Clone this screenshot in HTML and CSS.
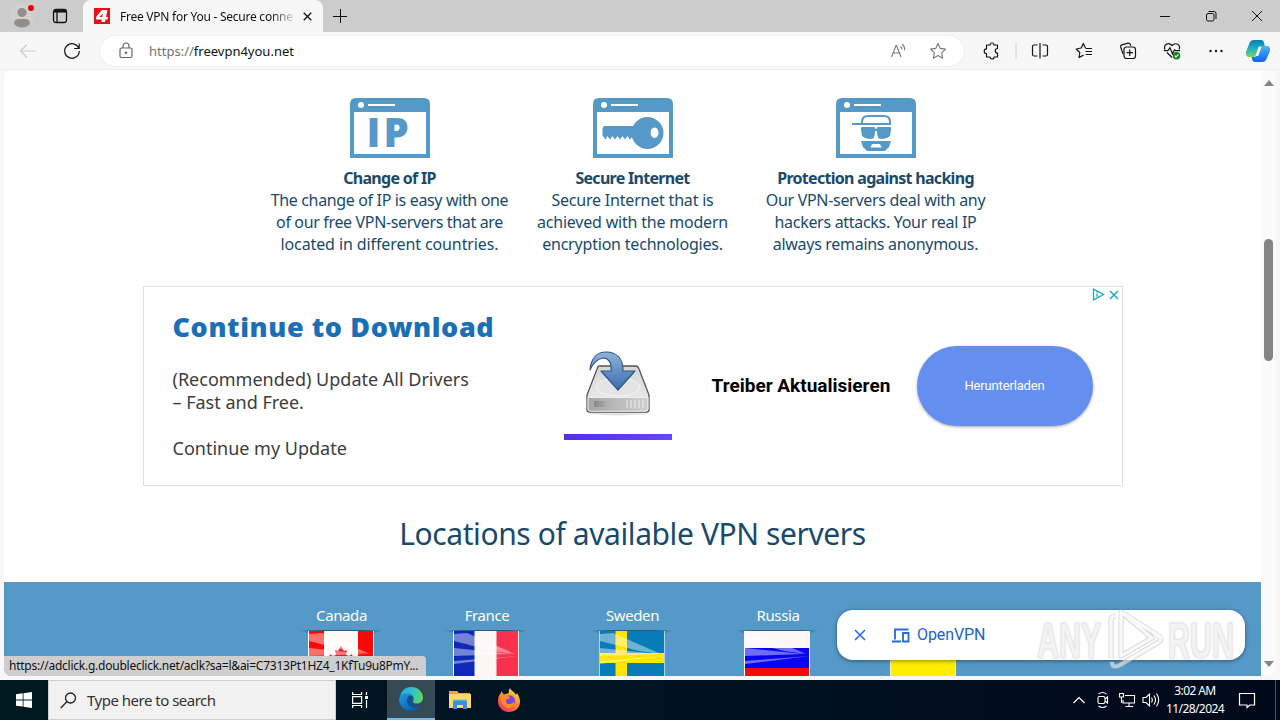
FILE: index.html
```html
<!DOCTYPE html>
<html lang="en">

<head>
    <meta charset="utf-8">
    <title>Free VPN for You</title>
    <link rel="stylesheet" href="styles.css">
</head>

<body>
    <!-- Tab strip -->
    <div class="titlebar">
        <div class="titlebar-left">
            <svg class="profile" width="24" height="24" viewBox="0 0 24 24">
                <circle cx="12" cy="12" r="12" fill="#d2d0cf"/>
                <circle cx="12" cy="8.500" r="4.600" fill="#918f8d"/>
                <path d="M4 20q0-5 5-5h6q5 0 5 5-3.500 3.500-8 3.500t-8-3.500z" fill="#918f8d"/>
                <circle cx="21" cy="4" r="3" fill="#e3000f"/>
            </svg>
            <svg width="16" height="16" viewBox="0 0 16 16" fill="none" stroke="#111" stroke-width="1.300">
                <rect x="1.500" y="1.500" width="13" height="13" rx="2.500"/>
                <path d="M2 3.300h12" stroke-width="2.500"/><path d="M5 4v10"/>
            </svg>
        </div>
        <div class="tab">
            <svg width="16" height="16" viewBox="0 0 16 16">
                <rect width="16" height="16" fill="#e80f18"/>
                <path d="M8 2h5.500L12 9h2l-.5 2.500h-2L11 14H7.300l.5-2.500H2L2.300 8.500zM8.800 5.500 5.500 9h2.700z" fill="#fff" fill-rule="evenodd"/>
            </svg>
            <span class="tab-title">Free VPN for You - Secure conne</span>
            <svg width="9" height="9" viewBox="0 0 9 9" stroke="#111" stroke-width="1.300"><path d="M.7.7l7.600 7.600M8.300.7.7 8.300"/></svg>
        </div>
        <svg class="newtab" width="14" height="14" viewBox="0 0 14 14" stroke="#111"><path d="M7.500 0v14M0 7.500h14"/></svg>
        <div class="window-buttons">
            <svg width="12" height="12" viewBox="0 0 12 12" stroke="#111"><path d="M1 6.500h10"/></svg>
            <svg width="12" height="12" viewBox="0 0 12 12" fill="none" stroke="#111"><rect x="1.500" y="3.500" width="7.500" height="7.500" rx="1.500"/><path d="M3.500 1.500H9q2 0 2 2V9"/></svg>
            <svg width="12" height="12" viewBox="0 0 12 12" stroke="#111"><path d="M1 1l10 10M11 1 1 11"/></svg>
        </div>
    </div>

    <!-- Address bar -->
    <div class="toolbar">
        <svg class="back" width="18" height="16" viewBox="0 0 18 16" fill="none" stroke="#cacaca" stroke-width="1.200"><path d="M16.500 8H1.500M8 1.500 1.500 8 8 14.500"/></svg>
        <svg class="reload" width="18" height="18" viewBox="0 0 18 18" fill="none" stroke="#151515" stroke-width="1.200"><path d="M15.800 6.300A7.300 7.300 0 1 0 16.300 9M16.200 1.500v5h-5"/></svg>
        <div class="address">
            <svg width="14" height="17" viewBox="0 0 14 17" fill="none" stroke="#666" stroke-width="1.200"><rect x="1" y="6" width="12" height="9.500" rx="1.500"/><path d="M4 6V4a3 3 0 0 1 6 0v2"/><circle cx="7" cy="10.800" r=".7" fill="#666"/></svg>
            <span class="url"><span class="scheme">https://</span>freevpn4you.net</span>
            <svg width="17" height="17" viewBox="0 0 17 17" fill="none" stroke="#777" stroke-width="1.100"><path d="M1.500 15 6 3.500h.6L11 15M3 11h6.500M10.500 4.500q1.500 1.200 1.300 3M12 2.300q3 2.200 2.600 6"/></svg>
            <svg class="star" width="18" height="18" viewBox="0 0 18 18" fill="none" stroke="#777" stroke-width="1.100" stroke-linejoin="round"><path d="M9 1.500l2.300 4.900 5.200.7-3.800 3.700.9 5.400L9 13.600l-4.600 2.600.9-5.400L1.500 7.100l5.200-.7z"/></svg>
        </div>
        <div class="tools">
            <svg width="18" height="18" viewBox="0 0 18 18" fill="none" stroke="#151515" stroke-width="1.200" stroke-linejoin="round"><path d="M4.500 3H8a2 2 0 0 1 4 0h3.500V6.500a2.200 2.200 0 0 0 0 4.500V15H12a2 2 0 0 1-4 0H4.500V11.500a2.300 2.300 0 0 1 0-4.600z"/></svg>
            <svg class="sep" width="2" height="18"><path d="M1 1v16" stroke="#ccc"/></svg>
            <svg width="18" height="18" viewBox="0 0 18 18" fill="none" stroke="#151515" stroke-width="1.200"><path d="M6.500 3H3Q1.500 3 1.500 4.500v8Q1.500 14 3 14h3.500M11.500 3H15q1.500 0 1.500 1.500v8Q16.500 14 15 14h-3.500M9 1v15.500"/></svg>
            <svg width="18" height="18" viewBox="0 0 18 18" fill="none" stroke="#151515" stroke-width="1.200" stroke-linejoin="round"><path d="M10.500 6 8.300 1.500 6.200 6 1.200 7l3.600 3.500L4 15.500l4.500-2.400M10.500 6.500h6.500M10.500 9.500h6.500M10.500 12.500h6.500"/></svg>
            <svg width="18" height="18" viewBox="0 0 18 18" fill="none" stroke="#151515" stroke-width="1.200"><path d="M4 12 1.700 5Q1.200 3.300 3 2.800l6-1.600q1.800-.4 2.300 1.300l.4 1.300"/><rect x="5" y="5" width="11.500" height="11.500" rx="2.500"/><path d="M10.700 7.500v6.500M7.500 10.700H14"/></svg>
            <svg width="18" height="18" viewBox="0 0 18 18" fill="none" stroke="#151515" stroke-width="1.200"><path d="M2 7.500C0 2 6 0 9 3.500 12 0 18.500 2.500 16 7.500M4 10.500l5 5M1 8.700h4l2-3 2.500 6 2-4 1 1H17"/><circle cx="13.500" cy="13.700" r="3.800" fill="#13801c" stroke="none"/><path d="m11.700 13.700 1.300 1.400 2.400-2.600" stroke="#fff"/></svg>
            <svg width="18" height="18" viewBox="0 0 18 18" fill="#151515"><circle cx="3.500" cy="9" r="1.200"/><circle cx="9" cy="9" r="1.200"/><circle cx="14.500" cy="9" r="1.200"/></svg>
        </div>
        <svg class="copilot" width="26" height="24" viewBox="0 0 26 24">
            <defs>
                <linearGradient id="cpA" x1="0" y1="0" x2="0" y2="1"><stop offset="0" stop-color="#0a7ab8"/><stop offset=".45" stop-color="#18aac6"/><stop offset="1" stop-color="#7bd35f"/></linearGradient>
                <linearGradient id="cpB" x1="0" y1="0" x2="0" y2="1"><stop offset="0" stop-color="#48b6f4"/><stop offset="1" stop-color="#1464ea"/></linearGradient>
            </defs>
            <path d="M9 1h7q2.500 0 3 3l.8 3H16q-2 0-2.700 2L11 16q-.7 2-2.800 2H4Q.5 18 1 13L4.500 4Q5.500 1 9 1z" fill="url(#cpA)"/>
            <path d="M17 23h-7q-2.500 0-3-3l-.5-2H9q2 0 2.700-2L14 9q.7-2 2.800-2H22q3.500 0 3 5l-3.500 8q-1 3-4.500 3z" fill="url(#cpB)"/>
            <path d="M13.800 8h2.700l-3.300 9h-2.700z" fill="#f4fbff"/>
        </svg>
    </div>

    <div class="window">
        <div class="page">
            <div class="features">
                <div class="feature">
                    <svg width="80" height="60" viewBox="0 0 80 60">
                        <path class="blue" fill-rule="evenodd" d="M6 0h68q6 0 6 6v54H0V6q0-6 6-6zM4 14v42h72V14z"/>
                        <circle cx="11" cy="7" r="3" fill="#fff"/><path d="M18 7h27" stroke="#fff" stroke-width="2"/>
                        <text class="blue ip" x="16.500 33.500" y="49">IP</text>
                    </svg>
                    <b>Change of IP</b>
                    <p class="f1">The change of IP is easy with one<br>of our free VPN-servers that are<br><span class="f1-last">located in different countries.</span></p>
                </div>
                <div class="feature">
                    <svg width="80" height="60" viewBox="0 0 80 60">
                        <path class="blue" fill-rule="evenodd" d="M6 0h68q6 0 6 6v54H0V6q0-6 6-6zM4 14v42h72V14z"/>
                        <circle cx="11" cy="7" r="3" fill="#fff"/><path d="M18 7h27" stroke="#fff" stroke-width="2"/>
                        <path class="blue" d="M11 28h31v13.500L39 39l-2 2.500-2.500-3.500-2.500 3.500-2.500-3.500-2.500 3.500-2.500-3.500-2.500 3.500-2.500-3.500-2.500 3.500-2.500-3.500-2 3.500-3-4v-7z"/>
                        <path class="blue" fill-rule="evenodd" d="M54.500 19a16 16 0 1 1 0 32 16 16 0 0 1 0-32zM61.500 29.500a4 5.200 0 1 0 .1 0z"/>
                    </svg>
                    <b>Secure Internet</b>
                    <p class="f2">Secure Internet that is<br>achieved with the modern<br>encryption technologies.</p>
                </div>
                <div class="feature">
                    <svg width="80" height="60" viewBox="0 0 80 60">
                        <path class="blue" fill-rule="evenodd" d="M6 0h68q6 0 6 6v54H0V6q0-6 6-6zM4 14v42h72V14z"/>
                        <circle cx="11" cy="7" r="3" fill="#fff"/><path d="M18 7h27" stroke="#fff" stroke-width="2"/>
                        <path d="M16 26h38v-2q0-6-6-6H32q-6 0-6 6v2" fill="none" stroke="#5599c8" stroke-width="2"/>
                        <path class="blue" d="M26 29h12q1.500 0 1.500 2h1q0-2 1.500-2h12q1.500 0 1 3l-1 6q-4 4-11 2.500Q41 39 41 33h-2q0 6-2 7.500Q30 42 26 38l-1-6q-.5-3 1-3z"/>
                        <path class="blue" fill-rule="evenodd" d="M25 43h30l-2 6-4 4H31l-4-4zM36 46l-1.500 3.500h11L44 46z"/>
                    </svg>
                    <b>Protection against hacking</b>
                    <p class="f3">Our VPN-servers deal with any<br>hackers attacks. Your real IP<br>always remains anonymous.</p>
                </div>
            </div>

            <div class="ad">
                <div class="ad-text">
                    <h3>Continue to Download</h3>
                    <p>(Recommended) Update All Drivers<br>– Fast and Free.</p>
                    <p class="ad-last">Continue my Update</p>
                </div>
                <div class="ad-image">
                    <svg width="68" height="66" viewBox="0 0 68 66">
                        <defs>
                            <linearGradient id="top" x1="0" y1="0" x2="0" y2="1"><stop offset="0" stop-color="#d4d5d6"/><stop offset="1" stop-color="#f0f0f0"/></linearGradient>
                            <linearGradient id="front" x1="0" y1="0" x2="1" y2="0"><stop offset="0" stop-color="#a6a6a6"/><stop offset="1" stop-color="#d0d0d0"/></linearGradient>
                            <linearGradient id="arrow" x1="0" y1="0" x2="0" y2="1"><stop offset="0" stop-color="#8fb2da"/><stop offset="1" stop-color="#3a6cad"/></linearGradient>
                            <linearGradient id="slot"><stop offset="0" stop-color="#858585"/><stop offset="1" stop-color="#b4b4b4"/></linearGradient>
                        </defs>
                        <ellipse cx="34" cy="62.500" rx="31" ry="3" fill="#e4e4e4"/>
                        <path d="M15 16h37q2 0 3 3l10 26v15q0 2-3 2H6q-3 0-3-2V45l10-26q1-3 2-3z" fill="url(#top)" stroke="#555" stroke-width="1.300"/>
                        <ellipse cx="34" cy="37" rx="22" ry="9" fill="#e4e4e5" stroke="#f4f4f4"/>
                        <path d="M4 47.500h60V59q0 2.300-3 2.300H7q-3 0-3-2.300z" fill="url(#front)" stroke="#eee"/>
                        <path d="M10 51h14v6H12q-2 0-2-2z" fill="url(#slot)"/>
                        <path d="M43 50v8M47 50v8M51 50v8M55 50v8M59 50v8" stroke="#e8e8e8" stroke-width="1.200"/>
                        <path d="M6 20C7 7 14 2 22 2c11 0 17 7 17 19h12L34 40 17 21h10c1-9-3-13-8-13-5 1-10 5-13 12z" fill="url(#arrow)" stroke="#31568b" stroke-width="1.200" stroke-linejoin="round"/>
                    </svg>
                    <div class="ad-bar"></div>
                </div>
                <div class="ad-title">Treiber Aktualisieren</div>
                <a class="ad-button">Herunterladen</a>
                <div class="ad-choices">
                    <svg width="13" height="13" viewBox="0 0 13 13" fill="none" stroke="#13afc1" stroke-width="1.300"><path d="M1.500 1.200v10.600L11.500 6.500zM5 5.800v3M5 3.800v1"/></svg>
                    <svg width="10" height="10" viewBox="0 0 10 10" stroke="#13a4b8" stroke-width="1.400"><path d="M1 1l8 8M9 1 1 9"/></svg>
                </div>
            </div>

            <h2>Locations of available VPN servers</h2>

            <div class="servers">
                <div class="server"><span>Canada</span>
                    <svg width="86" height="54" viewBox="0 0 86 54">
                        <use href="#flagShade"/>
                        <path d="M10 1h66v53H10z" fill="#fffafa"/><path d="M11 1h15v53H11zM60 1h15v53H60z" fill="#f90808"/>
                        <path d="m43 16 3 5 3-1-1 5 3 1 3-2 1 4h3l-3 6-8 6h-8l-8-6-3-6h3l1-4 3 2 3-1-1-5 3 1z" fill="#ef1720"/>
                        <use href="#flagGloss"/>
                    </svg>
                </div>
                <div class="server"><span>France</span>
                    <svg width="86" height="54" viewBox="0 0 86 54">
                        <use href="#flagShade"/>
                        <path d="M10 1h66v53H10z" fill="#faf7f6"/><path d="M11 1h20.500v53H11z" fill="#1028b8"/><path d="M53.500 1H75v53H53.500z" fill="#fa304f"/>
                        <use href="#flagGloss"/>
                    </svg>
                </div>
                <div class="server"><span>Sweden</span>
                    <svg width="86" height="54" viewBox="0 0 86 54">
                        <defs>
                            <linearGradient id="shadeFill"><stop offset="0" stop-color="#183c5c" stop-opacity="0"/><stop offset=".25" stop-color="#183c5c" stop-opacity=".7"/><stop offset=".75" stop-color="#183c5c" stop-opacity=".7"/><stop offset="1" stop-color="#183c5c" stop-opacity="0"/></linearGradient>
                            <g id="flagShade"><path d="M0 0h86L76 3H10z" fill="url(#shadeFill)"/></g>
                            <path id="flagGloss" d="M11 4 24 3 72 24 50 21 11 11zM11 18l58 6-58 2zM11 31l64-5-64 8z" fill="#fff" opacity=".42"/>
                        </defs>
                        <use href="#flagShade"/>
                        <path d="M10 1h66v53H10z" fill="#a8d9e9"/><path d="M11 1h64v53H11z" fill="#087bb9"/><path d="M26.500 1H38v53H26.500zM11 23h64v10H11z" fill="#ffe500"/>
                        <use href="#flagGloss"/>
                    </svg>
                </div>
                <div class="server"><span>Russia</span>
                    <svg width="86" height="54" viewBox="0 0 86 54">
                        <use href="#flagShade"/>
                        <path d="M10 1h66v53H10z" fill="#faf7f6"/><path d="M11 18h64v20H11z" fill="#0804f2"/><path d="M11 38h64v16H11z" fill="#f90808"/>
                        <use href="#flagGloss"/>
                    </svg>
                </div>
                <div class="server"><span>Ukraine</span>
                    <svg width="86" height="54" viewBox="0 0 86 54">
                        <path d="M10 1h66v53H10z" fill="#f7f4a0"/><path d="M11 1h64v26H11z" fill="#126ed0"/><path d="M11 27h64v27H11z" fill="#ffee00"/>
                    </svg>
                </div>
            </div>
        </div>

        <div class="scrollbar">
            <i class="up"></i>
            <i class="thumb"></i>
            <i class="down"></i>
        </div>

        <div class="anchor-ad">
            <svg width="12" height="12" viewBox="0 0 12 12" stroke="#2868d8" stroke-width="1.500"><path d="M1 1l10 10M11 1 1 11"/></svg>
            <svg class="devices" width="18" height="15" viewBox="0 0 18 15" fill="none" stroke="#2868d8" stroke-width="1.800"><path d="M16.500 1.500H3v10M0 13.500h9"/><path d="M11 5h5.500v8.500H11z"/></svg>
            <span>OpenVPN</span>
        </div>
        <div class="status">https://adclick.g.doubleclick.net/aclk?sa=l&amp;ai=C7313Pt1HZ4_1KfTu9u8PmY...</div>
    </div>

    <!-- Windows taskbar -->
    <div class="taskbar">
        <div class="start"><svg width="16" height="16" viewBox="0 0 16 16" fill="#fff"><path d="M0 2.300 6.700 1.300v6.200H0zM7.500 1.200 16 0v7.500H7.500zM0 8.400h6.700v6.200L0 13.700zM7.500 8.400H16V16l-8.500-1.200z"/></svg></div>
        <div class="search">
            <svg width="17" height="17" viewBox="0 0 17 17" fill="none" stroke="#222" stroke-width="1.300"><circle cx="10.500" cy="6" r="5"/><path d="M7 9.500.8 16"/></svg>
            <span>Type here to search</span>
        </div>
        <div class="task"><svg width="18" height="16" viewBox="0 0 18 16" fill="none" stroke="#fff" stroke-width="1.200"><path d="M1.600 0v2.500h9V0M1.600 16v-2.500h9V16M1.600 4.600h9v6.800h-9zM15.500 0v3M15.500 8v8"/><path d="M14 4h3v3h-3z" fill="#fff" stroke="none"/></svg></div>
        <div class="task active">
            <svg width="24" height="24" viewBox="0 0 24 24">
                <defs>
                    <linearGradient id="edA" x1="0" y1=".3" x2="1" y2=".4"><stop offset="0" stop-color="#25a9e2"/><stop offset=".6" stop-color="#32c5c4"/><stop offset="1" stop-color="#67d653"/></linearGradient>
                    <linearGradient id="edB" x1="0" y1="0" x2="1" y2="1"><stop offset="0" stop-color="#1c9ce0"/><stop offset="1" stop-color="#0d4c9c"/></linearGradient>
                </defs>
                <path d="M1 10C2 4 6 0 12 0c7 0 12 5 12 10.500 0 4-3 6-6.500 6-3 0-4-1-3.500-2.200 2-4-1-7.300-5-7.300-4 0-7 1.500-8 3z" fill="url(#edA)"/>
                <path d="M0 12C1 8 4 6.500 8 6.500c2.500 0 4.500 1 5.500 2.500-3-1-5.500 1-5.500 4.500 0 5 5 8 9 7 2-.4 4-1.500 5-1.700-2 3.500-6 5.200-10 5.200C5 24 0 18.500 0 12z" fill="url(#edB)"/>
                <path d="M13.500 9C10 8 8 10.500 8 13.500c0 5 5 8 9 7 2-.4 4-1.500 5-1.700-2 .5-8 .2-9-4.300-.4-2 1.500-2.500.5-5.500z" fill="#0f5292"/>
            </svg>
        </div>
        <div class="task">
            <svg width="22" height="20" viewBox="0 0 22 20"><path d="M0 1h8l2 2h11v4H0z" fill="#e9a72a"/><path d="M0 4h22v14H0z" fill="#ffd968"/><path d="M4 19v-7q0-2 2-2h10q2 0 2 2v7h-4v-4H8v4z" fill="#3a91d6"/><path d="M4 10h14" stroke="#79c0ee"/></svg>
        </div>
        <div class="task">
            <svg width="24" height="24" viewBox="0 0 24 24">
                <defs><linearGradient id="ff" x1=".8" y1="0" x2=".2" y2="1"><stop offset="0" stop-color="#ffe34a"/><stop offset=".45" stop-color="#ff9220"/><stop offset="1" stop-color="#f7266b"/></linearGradient></defs>
                <path d="M4 3l3 3.500L12 5q-1-2 1-5c1 3 5 4 6 7l1-2c2 3 3 6 3 8.500C23 20 18 24 12 24S1 19.500 1 13c0-4 1-6 3-8z" fill="url(#ff)"/>
                <circle cx="12.500" cy="13" r="5.700" fill="#7a45d8"/>
                <path d="M5 8q5-2 8 1.500-1.500 2-4 2-1 5 4.500 4.500 3-.5 3.500-3 1 6-4.500 7Q5 20 4 12z" fill="#ff8a28"/>
            </svg>
        </div>
        <div class="tray">
            <svg width="14" height="14" viewBox="0 0 14 14" fill="none" stroke="#fff" stroke-width="1.200"><path d="M1.500 10 7 4.500l5.500 5.500"/></svg>
            <svg class="meet" width="14" height="18" viewBox="0 0 14 18" fill="none" stroke="#fff" stroke-width="1.100"><rect x="2" y="5.500" width="7" height="7" rx="1.500"/><path d="M9 8l2.500-2v6L9 10M2.500 3q4-3 8 0M2.500 15q4 3 8 0"/></svg>
            <svg class="network" width="18" height="16" viewBox="0 0 18 16" fill="none" stroke="#fff" stroke-width="1.100"><path d="M7 3.500h9.500v7.500H5V8M11 11v3.500M7.500 14.500H15M1.500 1.500h4v3.500h-4zM3.500 5v6"/></svg>
            <svg width="18" height="16" viewBox="0 0 18 16" fill="none" stroke="#fff" stroke-width="1.100"><path d="M1 5.500h3l3.500-3.500v12L4 10.500H1zM9.500 5.500q1.600 2.500 0 5M12 3.500q3 4.500 0 9M14.500 1.500q4.300 6.500 0 13"/></svg>
            <div class="clock">3:02 AM<br>11/28/2024</div>
            <svg width="18" height="18" viewBox="0 0 18 18" fill="none" stroke="#fff" stroke-width="1.200"><path d="M1.500 2.500h15v11.500H12L9 16.500V14H1.500z"/></svg>
        </div>
    </div>

    <!-- Watermark -->
    <div class="watermark">
        <span>ANY</span>
        <svg width="60" height="64" viewBox="0 0 60 64" fill="none" stroke-linejoin="round">
            <path d="M6 50V11q0-4 5-4M16 3v44l31-18zM7 53q0 7 8 3l39-23q4-3 0-6L18 4" stroke="#b5b5b5" stroke-width="5"/>
            <path d="M6 50V11q0-4 5-4M16 3v44l31-18zM7 53q0 7 8 3l39-23q4-3 0-6L18 4" stroke="#f6f6f6" stroke-width="3.500"/>
        </svg>
        <span>RUN</span>
    </div>
</body>

</html>
```
FILE: styles.css
```css
* {
    box-sizing: border-box;
}

body {
    margin: 0;
    width: 1280px;
    height: 720px;
    overflow: hidden;
    display: flex;
    flex-direction: column;
    position: relative;
    background: #f7f7f7;
    font-family: "Noto Sans", sans-serif;
    color: #111;
}

svg {
    flex: none;
    display: block;
}

p, h2, h3 {
    margin: 0;
}

/* tab strip */
.titlebar {
    height: 32px;
    background: #cccccc;
    display: flex;
    align-items: center;
    flex: none;
}

.titlebar-left {
    width: 83px;
    padding-left: 10px;
    display: flex;
    align-items: center;
    gap: 18px;
    height: 32px;
}

.profile {
    overflow: visible;
}

.tab {
    width: 240px;
    height: 32px;
    background: #f7f7f7;
    border-radius: 8px 8px 0 0;
    display: flex;
    align-items: center;
    padding: 0 11px;
}

.tab-title {
    font-size: 12px;
    width: 176px;
    margin: 0 7px 0 10px;
    white-space: nowrap;
    letter-spacing: -0.25px;
    -webkit-mask-image: linear-gradient(90deg, #000 150px, transparent 178px);
    mask-image: linear-gradient(90deg, #000 150px, transparent 178px);
}

.newtab {
    margin-left: 10px;
}

.window-buttons {
    margin-left: auto;
    display: flex;
    gap: 34px;
    padding-right: 17px;
}

/* address bar */
.toolbar {
    height: 38px;
    flex: none;
    display: flex;
    align-items: center;
    padding-left: 19px;
    border-bottom: 1px solid #eeeeee;
}

.reload {
    margin-left: 26px;
}

.address {
    margin-left: 19px;
    width: 864px;
    height: 30px;
    border-radius: 15px;
    background: #fff;
    box-shadow: 0 0 1px #ccc;
    display: flex;
    align-items: center;
    padding: 0 17px 0 19px;
}

.url {
    margin-left: 16px;
    margin-right: auto;
    font-size: 13px;
}

.scheme {
    color: #747474;
}

.star {
    margin-left: 22px;
}

.tools {
    display: flex;
    margin-left: 18px;
    gap: 26px;
}

.sep {
    margin: 0 -12px 0 -11px;
}

.copilot {
    margin-left: 20px;
}

/* browser window */
.window {
    height: 606px;
    flex: none;
    margin: 0 4px;
    position: relative;
    display: flex;
    background: #fff;
    border-radius: 8px;
    overflow: hidden;
}

.page {
    width: 1257px;
    background: #fff;
    display: flex;
    flex-direction: column;
    align-items: center;
    color: #1a4a6b;
}

.features {
    display: grid;
    grid-template-columns: repeat(3, 243px);
    padding-top: 28px;
    flex: none;
}

.feature {
    display: flex;
    flex-direction: column;
    align-items: center;
    text-align: center;
    font-size: 16px;
    line-height: 22px;
    white-space: nowrap;
}

.feature svg {
    margin-bottom: 9px;
}

.feature b {
    letter-spacing: -0.7px;
}

.f1 {
    letter-spacing: -0.35px;
}

.f1-last {
    letter-spacing: -0.1px;
}

.f2 {
    letter-spacing: -0.2px;
}

.f3 {
    letter-spacing: -0.3px;
}

.blue {
    fill: #5599c8;
}

.ip {
    font: 800 40px "Open Sans", sans-serif;
}

.ad {
    width: 980px;
    height: 200px;
    margin-top: 31px;
    border: 1px solid #e0e0e0;
    display: flex;
    flex: none;
    position: relative;
}

.ad-text {
    width: 420px;
    padding: 24px 0 0 29px;
    color: #3c3c3c;
    font-size: 18px;
    line-height: 23px;
    white-space: nowrap;
}

.ad-text h3 {
    font-size: 27px;
    line-height: 32px;
    font-weight: 900;
    letter-spacing: 0.6px;
    color: #1b6fb7;
    margin-bottom: 25px;
}

.ad-last {
    margin-top: 23px;
}

.ad-image {
    width: 108px;
    padding-top: 63px;
    display: flex;
    flex-direction: column;
    align-items: center;
}

.ad-bar {
    width: 108px;
    height: 6px;
    margin-top: 18px;
    background: linear-gradient(90deg, #532de8, #6548f0);
}

.ad-title {
    width: 245px;
    padding: 0 0 2px 40px;
    align-self: center;
    font: bold 19px Roboto, sans-serif;
    color: #000;
    white-space: nowrap;
}

.ad-button {
    width: 176px;
    height: 80px;
    align-self: center;
    border-radius: 40px;
    background: #648eef;
    box-shadow: 0 1px 3px rgba(0, 0, 0, .35);
    color: #fff;
    font: 13px Roboto, sans-serif;
    letter-spacing: -0.15px;
    padding-bottom: 1px;
    display: flex;
    align-items: center;
    justify-content: center;
}

.ad-choices {
    position: absolute;
    top: 1px;
    right: 3px;
    display: flex;
    align-items: center;
    gap: 4px;
}

h2 {
    height: 96px;
    line-height: 95px;
    font-size: 30px;
    font-weight: normal;
    letter-spacing: -0.4px;
    white-space: nowrap;
    flex: none;
}

.servers {
    width: 100%;
    height: 94px;
    flex: none;
    background: #5599c8;
    display: grid;
    grid-template-columns: repeat(5, 145.5px);
    justify-content: center;
    padding-top: 21px;
    color: #fff;
    font-size: 15px;
    letter-spacing: -0.4px;
    line-height: 24px;
}

.server {
    display: flex;
    flex-direction: column;
    align-items: center;
}

.server svg {
    margin: 3px 2px 0 0;
}

.scrollbar {
    width: 15px;
    background: #fbfbfb;
    display: flex;
    flex-direction: column;
    align-items: center;
    padding: 10px 0 9px;
}

.up, .down {
    border: 5px solid transparent;
}

.up {
    border-top: 0;
    border-bottom: 6px solid #858585;
}

.down {
    border-bottom: 0;
    border-top: 6px solid #858585;
    margin-top: auto;
}

.thumb {
    width: 9px;
    height: 122px;
    margin-top: 153px;
    border-radius: 5px;
    background: #858585;
}

.anchor-ad {
    position: absolute;
    left: 833px;
    top: 540px;
    width: 408px;
    height: 50px;
    border-radius: 16px;
    background: #fff;
    box-shadow: 0 1px 4px rgba(0, 0, 0, .45);
    display: flex;
    align-items: center;
    padding-left: 17px;
    font: 16px Roboto, sans-serif;
    color: #1d61d4;
}

.anchor-ad span {
    padding-bottom: 2px;
    letter-spacing: -0.1px;
}

.devices {
    margin: 0 7px 0 26px;
}

.status {
    position: absolute;
    left: 0;
    bottom: 0;
    width: 422px;
    height: 20px;
    padding-left: 5px;
    background: #cecece;
    border-top-right-radius: 4px;
    border-bottom-left-radius: 6px;
    font-size: 12px;
    letter-spacing: -0.24px;
    line-height: 19px;
    white-space: nowrap;
}

/* taskbar */
.taskbar {
    height: 40px;
    margin-top: 4px;
    flex: none;
    background: linear-gradient(90deg, #001820, #001322 50%, #00091a);
    display: flex;
}

.start {
    width: 48px;
    display: flex;
    align-items: center;
    justify-content: center;
}

.search {
    width: 288px;
    background: #f2f2f2;
    border: 1px solid #cfcfcf;
    display: flex;
    align-items: center;
    padding-left: 11px;
    font-size: 15px;
    letter-spacing: -0.5px;
    color: #333;
}

.search span {
    margin-left: 10px;
}

.task {
    width: 48px;
    margin-right: 1px;
    display: flex;
    align-items: center;
    justify-content: center;
}

.task:nth-child(3) {
    margin-right: 3px;
}

.task.active {
    background: #344b54;
    border-bottom: 2px solid #76b9ed;
}

.tray {
    margin-left: auto;
    padding-right: 19px;
    margin-right: 4px;
    border-right: 1px solid #4c5560;
    display: flex;
    align-items: center;
    gap: 8px;
    color: #fff;
}

.meet {
    margin: 0 -2px 0 2px;
}

.network {
    margin: 0 -2px 0 2px;
}

.clock {
    width: 58px;
    margin: 0 6px 0 -2px;
    font-size: 12px;
    line-height: 18px;
    text-align: center;
    letter-spacing: -0.6px;
    white-space: nowrap;
}

/* watermark */
.watermark {
    position: absolute;
    left: 1037px;
    top: 609px;
    display: flex;
    align-items: center;
    gap: 3px;
    opacity: .6;
    font: bold 50px "Liberation Sans", sans-serif;
    color: #ececec;
    -webkit-text-stroke: 1px #d4d4d4;
    text-shadow: 0 0 3px #aaa;
}

.watermark span {
    width: 65px;
    display: block;
    transform: scaleX(.61);
    transform-origin: 0 50%;
    line-height: 64px;
}
```
